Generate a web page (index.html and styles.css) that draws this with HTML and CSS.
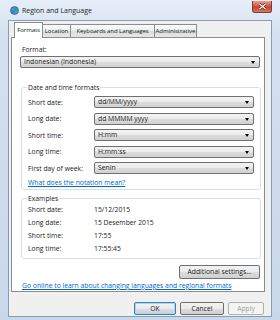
FILE: index.html
```html
<!DOCTYPE html>
<html lang="en">
<head>
  <meta charset="UTF-8">
  <title>Region and Language</title>
  <link rel="stylesheet" href="styles.css">
</head>
<body>
  <div class="window">
    <header class="titlebar">
      <svg class="app-icon" width="9" height="9" viewBox="0 0 9 9">
        <circle cx="4.5" cy="4.5" r="4" fill="#3d86d6" stroke="#1f5aa0" stroke-width="0.6"/>
        <path d="M2 2.5 Q3.5 1.5 4.5 2.5 L4 4 L2.5 4.5 Z M5 5 L7.5 4.5 L7 7 L5.5 7.5 Z" fill="#5fb548"/>
      </svg>
      <span class="title">Region and Language</span>
      <button class="close-btn" aria-label="Close">
        <svg width="9" height="7" viewBox="0 0 9 7">
          <path d="M1.5 1 L7.5 6 M7.5 1 L1.5 6" stroke="#5a1a1a" stroke-width="2.4"/>
          <path d="M1.5 1 L7.5 6 M7.5 1 L1.5 6" stroke="#fff" stroke-width="1.3"/>
        </svg>
      </button>
    </header>

    <div class="client">
      <nav class="tabs">
        <span class="tab tab-active tab-formats">Formats</span>
        <span class="tab tab-location">Location</span>
        <span class="tab tab-keyboards">Keyboards and Languages</span>
        <span class="tab tab-admin">Administrative</span>
      </nav>

      <section class="tab-page">
        <div class="field-label">Format:</div>
        <div class="combo combo-wide">Indonesian (Indonesia)</div>

        <fieldset class="group">
          <legend>Date and time formats</legend>
          <div class="form-grid">
            <span>Short date:</span><div class="combo">dd/MM/yyyy</div>
            <span>Long date:</span><div class="combo">dd MMMM yyyy</div>
            <span>Short time:</span><div class="combo">H:mm</div>
            <span>Long time:</span><div class="combo">H:mm:ss</div>
            <span>First day of week:</span><div class="combo">Senin</div>
          </div>
          <a href="#" class="link notation-link">What does the notation mean?</a>
        </fieldset>

        <fieldset class="group">
          <legend>Examples</legend>
          <div class="examples">
            <span>Short date:</span><span>15/12/2015</span>
            <span>Long date:</span><span>15 Desember 2015</span>
            <span>Short time:</span><span>17:55</span>
            <span>Long time:</span><span>17:55:45</span>
          </div>
        </fieldset>

        <div class="page-actions">
          <button class="button button-additional">Additional settings...</button>
        </div>
        <a href="#" class="link">Go online to learn about changing languages and regional formats</a>
      </section>

      <footer class="dialog-buttons">
        <button class="button button-default button-ok">OK</button>
        <button class="button button-cancel">Cancel</button>
        <button class="button button-apply" disabled>Apply</button>
      </footer>
    </div>
  </div>
</body>
</html>
```

FILE: styles.css
```css
body {
  margin: 0;
  padding: 0;
  background-color: #d3dfee;
  font-family: 'Open Sans', 'Liberation Sans', sans-serif;
  font-size: 6.8px;
  line-height: 9px;
  color: #1b1b1b;
}

.window {
  width: 280px;
  height: 320px;
  box-sizing: border-box;
  padding: 0 8px 3px 8px;
  background: linear-gradient(to bottom, #e6eef8, #d3e0ef 40px, #c9d8ea);
  display: flex;
  flex-direction: column;
}

.titlebar {
  height: 20px;
  display: flex;
  align-items: center;
  position: relative;
}

.app-icon {
  margin-left: 2px;
  margin-right: 3px;
}

.title {
  font-size: 7px;
  color: #1e1e1e;
}

.close-btn {
  position: absolute;
  right: 0;
  top: 1px;
  width: 20px;
  height: 12px;
  padding: 0;
  border: 1px solid #7c3a3a;
  border-top: none;
  border-radius: 0 0 3px 3px;
  background: linear-gradient(to bottom, #e7a08f, #d1503b 50%, #c13b26 51%, #d97a5f);
  display: flex;
  align-items: center;
  justify-content: center;
}

.client {
  flex: 1;
  background-color: #f0f0f0;
  border: 1px solid #8c9cb0;
  padding: 1px 6px 0 2px;
  display: flex;
  flex-direction: column;
}

/* Tabs */
.tabs {
  display: flex;
  align-items: flex-end;
  height: 15px;
  padding-left: 3px;
  font-size: 6.1px;
  letter-spacing: -0.1px;
}

.tab {
  box-sizing: border-box;
  height: 13px;
  border: 1px solid #898c95;
  border-bottom: none;
  border-left: none;
  background: linear-gradient(to bottom, #fbfbfb, #ececec 50%, #dcdcdc 51%, #e6e6e6);
  white-space: nowrap;
  text-align: center;
  line-height: 12px;
}

.tab-active {
  height: 16px;
  border-left: 1px solid #898c95;
  background: #fff;
  position: relative;
  z-index: 1;
  margin-bottom: -1px;
  line-height: 14px;
}

.tab-formats { width: 29px; }
.tab-location { width: 28px; }
.tab-keyboards { width: 84px; }
.tab-admin { width: 42px; }

.tab-page {
  flex: none;
  height: 255px;
  box-sizing: border-box;
  border: 1px solid #898c95;
  background: #fff;
  padding: 7px 3px 0 9px;
  display: flex;
  flex-direction: column;
}

.field-label {
  margin-left: 1px;
}

/* Combo boxes */
.combo {
  height: 12px;
  box-sizing: border-box;
  border: 1px solid #707070;
  border-radius: 2px;
  background: linear-gradient(to bottom, #f3f3f3, #ebebeb 50%, #dddddd 51%, #d1d1d1);
  padding-left: 3px;
  line-height: 10px;
  position: relative;
  white-space: nowrap;
}

.combo::after {
  content: '';
  position: absolute;
  right: 4px;
  top: 4px;
  border-left: 2.5px solid transparent;
  border-right: 2.5px solid transparent;
  border-top: 3px solid #000;
}

.combo-wide {
  margin: 2px 1px 0 -1px;
}

/* Group boxes */
.group {
  margin: 15px 0 0 0;
  padding: 4px 6px 2px 6px;
  border: 1px solid #d5dfe5;
  border-radius: 3px;
}

.group legend {
  padding: 0 1px;
  margin-left: -1px;
  line-height: 9px;
}

.group + .group {
  margin-top: 4px;
  padding-top: 0;
  padding-bottom: 3px;
}

.form-grid {
  display: grid;
  grid-template-columns: 66px 1fr;
  row-gap: 4.5px;
  align-items: center;
}

.examples {
  display: grid;
  grid-template-columns: 66px 1fr;
  grid-auto-rows: 13px;
  align-items: center;
}

.link {
  color: #0066cc;
  text-decoration: underline;
  white-space: nowrap;
}

.notation-link {
  margin-top: 4px;
  display: inline-block;
}

/* Buttons */
.button {
  font-family: inherit;
  font-size: inherit;
  color: #1b1b1b;
  height: 14px;
  padding: 0;
  border: 1px solid #707070;
  border-radius: 2px;
  background: linear-gradient(to bottom, #f2f2f2, #ebebeb 50%, #dddddd 51%, #cfcfcf);
  line-height: 12px;
}

.button:disabled {
  color: #a0a0a0;
  border-color: #adb2b5;
  background: #f4f4f4;
}

.button-default {
  border-color: #3c7fb1;
  box-shadow: inset 0 0 0 1px #a6d8f5;
}

.page-actions {
  display: flex;
  justify-content: flex-end;
  margin-top: 6px;
  margin-right: 1px;
}

.button-additional {
  width: 81px;
}

.page-actions + .link {
  margin-top: 2px;
  margin-left: 1px;
}

.dialog-buttons {
  display: flex;
  justify-content: flex-end;
  gap: 4px;
  margin-top: 10px;
  padding-right: 1px;
}

.dialog-buttons .button {
  height: 13px;
}

.button-ok { width: 42px; }
.button-cancel { width: 44px; }
.button-apply { width: 36px; }
```
